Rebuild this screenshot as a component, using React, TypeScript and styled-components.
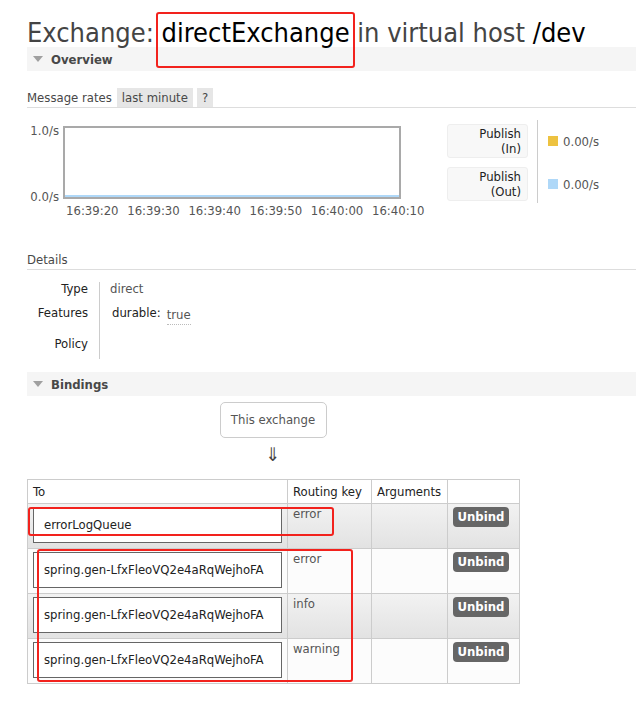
import React from "react";
import styled, { createGlobalStyle } from "styled-components";

const GlobalStyle = createGlobalStyle`
  html, body { margin: 0; padding: 0; background: #fff; }
  body {
    font-family: "DejaVu Sans Condensed", "DejaVu Sans", "Liberation Sans", sans-serif;
    font-size: 13px;
    color: #484848;
  }
`;

const Page = styled.div`
  position: relative;
  width: 636px;
  height: 706px;
  padding-left: 27px;
  box-sizing: border-box;
  overflow: hidden;
`;

const Title = styled.h1`
  margin: 0;
  padding-top: 18px;
  height: 29px;
  line-height: 29px;
  font-size: 27px;
  font-weight: normal;
  color: #444;
  white-space: nowrap;
`;

const Dark = styled.span`
  color: #000;
`;

const SectionHeader = styled.div<{ $top: number }>`
  margin-top: ${(p) => p.$top}px;
  height: 24px;
  background: #f5f5f5;
  display: flex;
  align-items: center;
  gap: 8px;
  padding-left: 6px;
  font-weight: bold;
  font-size: 13px;
  color: #484848;
`;

const Triangle = styled.span`
  width: 0;
  height: 0;
  border-left: 5.5px solid transparent;
  border-right: 5.5px solid transparent;
  border-top: 6px solid #a0a0a0;
`;

const RatesHeader = styled.div`
  margin-top: 17px;
  height: 19px;
  display: flex;
  align-items: stretch;
  border-bottom: 1px solid #ddd;
  line-height: 19px;
`;

const RatesLabel = styled.span`
  margin-right: 5px;
`;

const Pill = styled.span`
  background: #e6e6e6;
  padding: 0 5px;
  margin-right: 4px;
`;

const ChartRow = styled.div`
  margin-top: 12px;
  display: flex;
  align-items: flex-start;
`;

const Chart = styled.div`
  width: 374px;
  flex-shrink: 0;
  display: flex;
  flex-direction: column;
`;

const PlotRow = styled.div`
  display: flex;
  align-items: flex-start;
`;

const YAxis = styled.div`
  width: 36px;
  height: 81px;
  margin-top: 3px;
  padding-right: 4px;
  box-sizing: border-box;
  display: flex;
  flex-direction: column;
  justify-content: space-between;
  align-items: flex-end;
  line-height: 15px;
  color: #555;
`;

const Plot = styled.div`
  margin-top: 6px;
  width: 338px;
  height: 73px;
  box-sizing: border-box;
  border: 2px solid #a9a9a9;
  background: #fff;
  display: flex;
  flex-direction: column;
  justify-content: flex-end;
`;

const ZeroLine = styled.div`
  height: 2px;
  background: #afd8f8;
`;

const XAxis = styled.div`
  padding-left: 39px;
  display: flex;
  line-height: 14px;
  color: #555;
`;

const Tick = styled.span`
  width: 61.2px;
  flex-shrink: 0;
  white-space: nowrap;
`;

const Legend = styled.div`
  margin-left: 46px;
  display: flex;
  align-items: flex-start;
`;

const LegendCol = styled.div`
  padding-top: 4px;
  display: flex;
  flex-direction: column;
  gap: 9px;
`;

const LegendBox = styled.div`
  width: 81px;
  height: 34px;
  box-sizing: border-box;
  background: #f8f8f8;
  border: 1px solid #eee;
  border-radius: 3px;
  display: flex;
  flex-direction: column;
  justify-content: center;
  align-items: flex-end;
  padding-right: 6px;
  line-height: 15px;
  color: #222;
`;

const LegendSep = styled.div`
  margin-left: 9px;
  width: 1px;
  height: 83px;
  background: #ccc;
`;

const ValueCol = styled(LegendCol)`
  margin-left: 10px;
`;

const ValueRow = styled.div`
  height: 34px;
  display: flex;
  align-items: center;
  color: #555;
`;

const Swatch = styled.span<{ $color: string }>`
  width: 10px;
  height: 10px;
  background: ${(p) => p.$color};
  margin-right: 5px;
`;

const SubHeader = styled.div`
  margin-top: 33px;
  height: 18px;
  line-height: 18px;
  border-bottom: 1px solid #ddd;
`;

const DetailTable = styled.div`
  margin-top: 12px;
  display: grid;
  grid-template-columns: 72px 1fr;
  grid-template-rows: 24px 31px 22px;
  line-height: 13px;
`;

const DetailKey = styled.div`
  text-align: right;
  padding-right: 11px;
  color: #222;
`;

const DetailValue = styled.div`
  border-left: 1px solid #ccc;
  padding-left: 10px;
  display: flex;
  align-items: flex-start;
  color: #555;
`;

const FeatureKey = styled.span`
  margin-left: 2px;
  color: #222;
`;

const FeatureValue = styled.span`
  margin-left: 6px;
  margin-top: 2px;
  border-bottom: 1px dotted #bbb;
  padding-bottom: 3px;
  color: #555;
`;

const BindingsBody = styled.div`
  width: 492px;
  display: flex;
  flex-direction: column;
  align-items: center;
`;

const ExchangeBox = styled.div`
  margin-top: 6px;
  width: 107px;
  height: 36px;
  box-sizing: border-box;
  border: 1px solid #ccc;
  border-radius: 5px;
  line-height: 34px;
  text-align: center;
  color: #555;
`;

const Arrow = styled.div`
  margin-top: 6px;
  height: 20px;
  line-height: 20px;
  font-size: 19px;
  color: #444;
`;

const Table = styled.table`
  align-self: flex-start;
  margin-top: 15px;
  width: 492px;
  border-collapse: collapse;
  border: 1px solid #ccc;
  table-layout: fixed;
`;

const Th = styled.th<{ $w: number }>`
  width: ${(p) => p.$w - 11}px;
  height: 23px;
  padding: 0 5px;
  text-align: left;
  font-weight: normal;
  color: #222;
  border: 1px solid #ccc;
  background: #fff;
  white-space: nowrap;
`;

const Tr = styled.tr<{ $alt: boolean }>`
  background: ${(p) => (p.$alt ? "linear-gradient(#f2f2f2, #e2e2e2)" : "#fcfcfc")};
`;

const Td = styled.td`
  height: 38px;
  padding: 3px 5px;
  vertical-align: top;
  border: 1px solid #ccc;
  line-height: 14px;
  color: #555;
`;

const ToBox = styled.div`
  width: 249px;
  height: 36px;
  box-sizing: border-box;
  border: 1px solid #666;
  background: #fff;
  padding-left: 10px;
  line-height: 34px;
  color: #222;
  white-space: nowrap;
`;

const UnbindButton = styled.button`
  width: 56px;
  height: 20px;
  padding: 0;
  border: none;
  border-radius: 4px;
  background: #666;
  color: #fff;
  font-family: inherit;
  font-size: 13px;
  font-weight: bold;
  line-height: 20px;
`;

const Highlight = styled.div<{ $l: number; $t: number; $w: number; $h: number }>`
  position: absolute;
  left: ${(p) => p.$l}px;
  top: ${(p) => p.$t}px;
  width: ${(p) => p.$w}px;
  height: ${(p) => p.$h}px;
  box-sizing: border-box;
  border: 2px solid #f2221d;
  border-radius: 3px;
  pointer-events: none;
`;

const ticks = ["16:39:20", "16:39:30", "16:39:40", "16:39:50", "16:40:00", "16:40:10"];

const bindings = [
  { to: "errorLogQueue", key: "error" },
  { to: "spring.gen-LfxFleoVQ2e4aRqWejhoFA", key: "error" },
  { to: "spring.gen-LfxFleoVQ2e4aRqWejhoFA", key: "info" },
  { to: "spring.gen-LfxFleoVQ2e4aRqWejhoFA", key: "warning" },
];

export default function App() {
  return (
    <>
      <GlobalStyle />
      <Page>
        <Title>
          Exchange: <Dark>directExchange</Dark> in virtual host <Dark>/dev</Dark>
        </Title>
        <SectionHeader $top={0}>
          <Triangle />
          Overview
        </SectionHeader>
        <RatesHeader>
          <RatesLabel>Message rates</RatesLabel>
          <Pill>last minute</Pill>
          <Pill>?</Pill>
        </RatesHeader>
        <ChartRow>
          <Chart>
            <PlotRow>
              <YAxis>
                <span>1.0/s</span>
                <span>0.0/s</span>
              </YAxis>
              <Plot>
                <ZeroLine />
              </Plot>
            </PlotRow>
            <XAxis>
              {ticks.map((t) => (
                <Tick key={t}>{t}</Tick>
              ))}
            </XAxis>
          </Chart>
          <Legend>
            <LegendCol>
              <LegendBox>
                <span>Publish</span>
                <span>(In)</span>
              </LegendBox>
              <LegendBox>
                <span>Publish</span>
                <span>(Out)</span>
              </LegendBox>
            </LegendCol>
            <LegendSep />
            <ValueCol>
              <ValueRow>
                <Swatch $color="#edc240" />
                0.00/s
              </ValueRow>
              <ValueRow>
                <Swatch $color="#afd8f8" />
                0.00/s
              </ValueRow>
            </ValueCol>
          </Legend>
        </ChartRow>
        <SubHeader>Details</SubHeader>
        <DetailTable>
          <DetailKey>Type</DetailKey>
          <DetailValue>direct</DetailValue>
          <DetailKey>Features</DetailKey>
          <DetailValue>
            <FeatureKey>durable:</FeatureKey>
            <FeatureValue>true</FeatureValue>
          </DetailValue>
          <DetailKey>Policy</DetailKey>
          <DetailValue />
        </DetailTable>
        <SectionHeader $top={13}>
          <Triangle />
          Bindings
        </SectionHeader>
        <BindingsBody>
          <ExchangeBox>This exchange</ExchangeBox>
          <Arrow>⇓</Arrow>
          <Table>
            <thead>
              <tr>
                <Th $w={260}>To</Th>
                <Th $w={84}>Routing key</Th>
                <Th $w={76}>Arguments</Th>
                <Th $w={72}></Th>
              </tr>
            </thead>
            <tbody>
              {bindings.map((b, i) => (
                <Tr key={i} $alt={i % 2 === 0}>
                  <Td>
                    <ToBox>{b.to}</ToBox>
                  </Td>
                  <Td>{b.key}</Td>
                  <Td></Td>
                  <Td>
                    <UnbindButton>Unbind</UnbindButton>
                  </Td>
                </Tr>
              ))}
            </tbody>
          </Table>
        </BindingsBody>
        <Highlight $l={156} $t={12} $w={199} $h={56} />
        <Highlight $l={28} $t={507} $w={306} $h={29} />
        <Highlight $l={37} $t={549} $w={316} $h={133} />
      </Page>
    </>
  );
}
